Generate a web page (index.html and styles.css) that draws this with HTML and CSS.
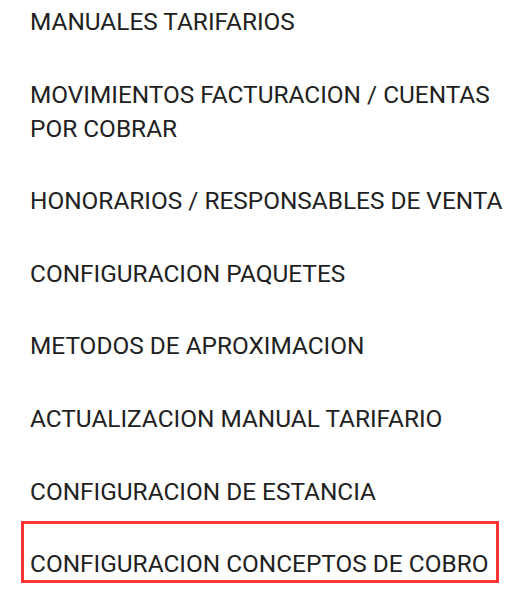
FILE: index.html
```html
<!DOCTYPE html>
<html lang="es">
<head>
<meta charset="utf-8">
<title>Menú</title>
<link rel="stylesheet" href="styles.css">
</head>
<body>
<ul class="menu">
  <li class="menu-item">MANUALES TARIFARIOS</li>
  <li class="menu-item">MOVIMIENTOS FACTURACION / CUENTAS POR COBRAR</li>
  <li class="menu-item">HONORARIOS / RESPONSABLES DE VENTA</li>
  <li class="menu-item">CONFIGURACION PAQUETES</li>
  <li class="menu-item">METODOS DE APROXIMACION</li>
  <li class="menu-item">ACTUALIZACION MANUAL TARIFARIO</li>
  <li class="menu-item">CONFIGURACION DE ESTANCIA</li>
  <li class="menu-item menu-item--highlight">CONFIGURACION CONCEPTOS DE COBRO</li>
</ul>
</body>
</html>
```

FILE: styles.css
```css
html, body {
  margin: 0;
  padding: 0;
  background: #ffffff;
}

body {
  font-family: Roboto, "Liberation Sans", Arial, sans-serif;
  color: #212121;
  font-size: 24.4px;
  line-height: 34px;
  padding-bottom: 20px;
}

.menu {
  list-style: none;
  margin: 0;
  padding: 5px 10px 0 30px;
  display: flex;
  flex-direction: column;
  gap: 38.6px;
}

.menu-item {
  margin: 0;
  padding: 0;
}

.menu-item--highlight {
  position: relative;
}

.menu-item--highlight::after {
  content: "";
  position: absolute;
  top: -26px;
  left: -9px;
  width: 478px;
  height: 62px;
  box-sizing: border-box;
  border: 3px solid #ff3535;
  pointer-events: none;
}
```
